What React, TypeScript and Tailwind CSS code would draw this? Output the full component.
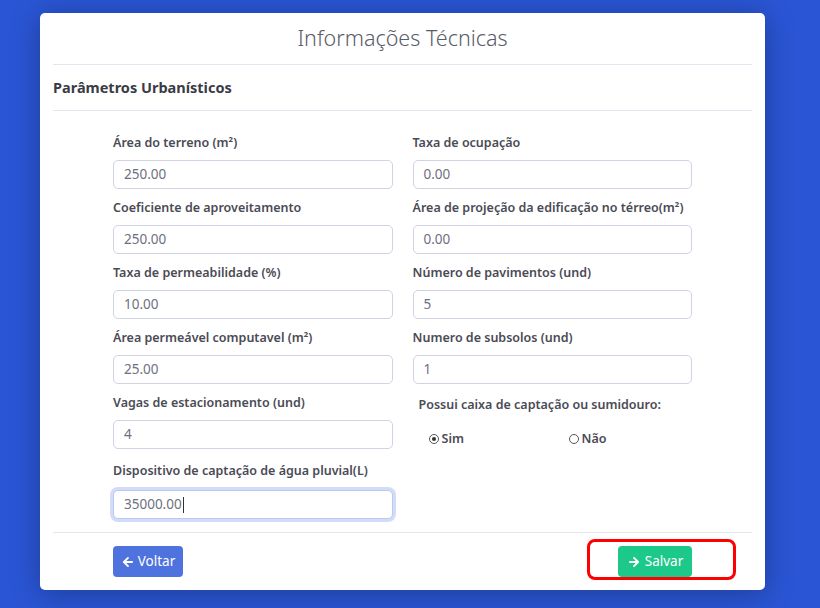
import { ArrowLeft, ArrowRight } from 'lucide-react';

const font = { fontFamily: '"Noto Sans", "Open Sans", Lato, sans-serif' };

type Field = { label: string; value: string; focused?: boolean };

const left: Field[] = [
  { label: 'Área do terreno (m²)', value: '250.00' },
  { label: 'Coeficiente de aproveitamento', value: '250.00' },
  { label: 'Taxa de permeabilidade (%)', value: '10.00' },
  { label: 'Área permeável computavel (m²)', value: '25.00' },
  { label: 'Vagas de estacionamento (und)', value: '4' },
  { label: 'Dispositivo de captação de água pluvial(L)', value: '35000.00', focused: true },
];

const right: Field[] = [
  { label: 'Taxa de ocupação', value: '0.00' },
  { label: 'Área de projeção da edificação no térreo(m²)', value: '0.00' },
  { label: 'Número de pavimentos (und)', value: '5' },
  { label: 'Numero de subsolos (und)', value: '1' },
];

function Input({ f }: { f: Field }) {
  return (
    <div className={'pb-[7px] ' + (f.focused ? 'pt-[3px]' : '')}>
      <div
        className={
          'h-[24px] flex items-center text-[12.5px] font-semibold text-[#4a4b55] leading-none whitespace-nowrap ' +
          (f.focused ? 'mb-[7px]' : 'mb-[5px]')
        }
      >
        {f.label}
      </div>
      <div
        className={
          'h-[29px] rounded-[5px] border bg-white flex items-center pl-[10px] text-[13.5px] text-[#6e707e] ' +
          (f.focused
            ? 'border-[#bac8f3] shadow-[0_0_0_3px_rgba(78,115,223,0.25)]'
            : 'border-[#d1d3e2]')
        }
      >
        {f.value}
        {f.focused && <span className="inline-block w-px h-[16px] bg-[#333] ml-px" />}
      </div>
    </div>
  );
}

function Radio({ checked, label }: { checked?: boolean; label: string }) {
  return (
    <div className="flex items-center gap-[3px] text-[12.5px] font-semibold text-[#4a4b55]">
      <span className="w-[10px] h-[10px] rounded-full border border-[#555] flex items-center justify-center">
        {checked && <span className="w-[4px] h-[4px] rounded-full bg-[#333]" />}
      </span>
      {label}
    </div>
  );
}

export default function App() {
  return (
    <div className="w-[820px] h-[608px] bg-[#2a56d5] pt-[13px] pl-[40px] overflow-hidden" style={font}>
      <div className="w-[725px] bg-white rounded-[5px] px-[13px] shadow-[0_0.2rem_1.75rem_0_rgba(20,30,80,0.45)]">
        <div className="h-[51px] flex items-center justify-center text-[21.5px] text-[#5a5c69] font-light">
          Informações Técnicas
        </div>
        <div className="h-px bg-[#e3e6f0]" />
        <div className="h-[45px] flex items-center text-[14.5px] font-bold text-[#3a3b45]">
          Parâmetros Urbanísticos
        </div>
        <div className="h-px bg-[#e3e6f0]" />

        <div className="w-[579px] mx-auto pt-[20px] pb-[6px] grid grid-cols-2 gap-x-[20px]">
          <div>
            {left.map((f) => (
              <Input key={f.label} f={f} />
            ))}
          </div>
          <div>
            {right.map((f) => (
              <Input key={f.label} f={f} />
            ))}
            <div className="pl-[6px] pt-[2px]">
              <div className="h-[24px] flex items-center text-[12.5px] font-semibold text-[#4a4b55] whitespace-nowrap">
                Possui caixa de captação ou sumidouro:
              </div>
              <div className="flex mt-[13px] pl-[10px]">
                <div className="w-[140px]">
                  <Radio checked label="Sim" />
                </div>
                <Radio label="Não" />
              </div>
            </div>
          </div>
        </div>

        <div className="h-px bg-[#e3e6f0]" />
        <div className="w-[579px] mx-auto pt-[13px] pb-[13px] flex justify-between">
          <button
            type="button"
            className="h-[31px] w-[70px] rounded-[4px] bg-[#4e73df] text-white text-[13.5px] flex items-center justify-center gap-[3px]"
          >
            <ArrowLeft size={14} strokeWidth={3.2} />
            Voltar
          </button>
          <div className="relative">
            <button
              type="button"
              className="h-[31px] w-[74px] rounded-[4px] bg-[#1cc88a] text-white text-[13.5px] flex items-center justify-center gap-[4px]"
            >
              <ArrowRight size={14} strokeWidth={3.2} />
              Salvar
            </button>
            <div className="absolute left-[-31px] top-[-7px] w-[149px] h-[41px] rounded-[8px] border-[3px] border-[#ff0000]" />
          </div>
        </div>
      </div>
    </div>
  );
}
